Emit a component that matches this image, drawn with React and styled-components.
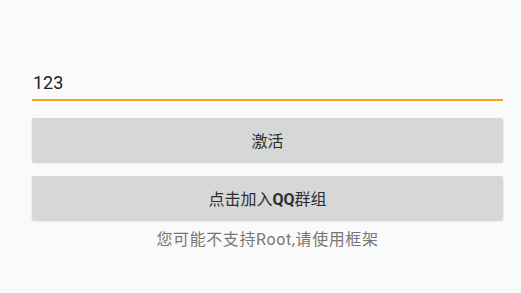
import React from "react";
import styled, { createGlobalStyle } from "styled-components";

const GlobalStyle = createGlobalStyle`
  html, body {
    margin: 0;
    padding: 0;
    background: #fafafa;
  }
  body {
    font-family: Roboto, "Noto Sans CJK SC", sans-serif;
  }
`;

const Screen = styled.div`
  width: 521px;
  height: 293px;
  box-sizing: border-box;
  padding: 71px 18px 0 32px;
  display: flex;
  flex-direction: column;
`;

const Field = styled.input`
  font-family: inherit;
  font-size: 18px;
  color: #212121;
  background: transparent;
  border: none;
  border-bottom: 2px solid #f7a11d;
  outline: none;
  padding: 0 1px 5px 1px;
  height: 30px;
  box-sizing: border-box;
  margin: 0;
  width: 100%;
`;

const Button = styled.button`
  font-family: inherit;
  font-size: 16px;
  color: #2e2e2e;
  background: #d6d7d7;
  border: none;
  border-radius: 2px;
  box-shadow: 0 1px 2px rgba(0, 0, 0, 0.18);
  height: 44px;
  margin-top: ${(p) => p.$top}px;
  width: 100%;
  padding: 0;
  cursor: pointer;

  b {
    font-weight: 700;
  }
`;

const Hint = styled.div`
  margin-top: 6px;
  text-align: center;
  font-size: 16px;
  letter-spacing: 0.6px;
  color: #777777;
`;

export default function App() {
  return (
    <>
      <GlobalStyle />
      <Screen>
        <Field defaultValue="123" />
        <Button $top={17}>激活</Button>
        <Button $top={14}>
          点击加入<b>QQ</b>群组
        </Button>
        <Hint>您可能不支持Root,请使用框架</Hint>
      </Screen>
    </>
  );
}
